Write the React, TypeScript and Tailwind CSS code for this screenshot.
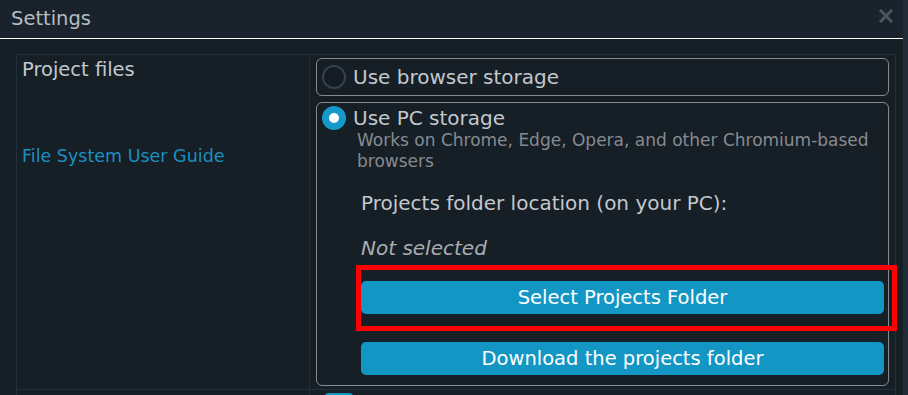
const font = { fontFamily: '"DejaVu Sans", "Open Sans", sans-serif' };

function Radio({ checked }: { checked: boolean }) {
  if (checked) {
    return (
      <span className="flex h-[24px] w-[24px] shrink-0 items-center justify-center rounded-full bg-[#1599c8]">
        <span className="h-[10px] w-[10px] rounded-full bg-white" />
      </span>
    );
  }
  return (
    <span className="h-[24px] w-[24px] shrink-0 rounded-full border-2 border-[#34414d] bg-[#141b22]" />
  );
}

export default function App() {
  return (
    <div className="flex h-[395px] w-[908px] overflow-hidden bg-[#1f2b36]" style={font}>
      <div className="flex w-[903px] flex-col bg-[#161e26]">
        {/* header */}
        <div className="flex h-[39px] shrink-0 items-center justify-between border-b border-white bg-[#1a232c] pl-[11px] pr-[10px]">
          <span className="text-[19.5px] leading-none text-[#b4bcc4]">Settings</span>
          <svg width="14" height="14" viewBox="0 0 14 14" className="-mt-[6px]">
            <path d="M2 2 L12 12 M12 2 L2 12" stroke="#4b5661" strokeWidth="3" strokeLinecap="square" />
          </svg>
        </div>

        <div className="shrink-0 pl-[16px] pr-[7px] pt-[15px]">
          <div className="grid grid-cols-[293px_1fr] border-l border-r border-t border-[#22303c]">
            {/* project files row */}
            <div className="flex flex-col border-b border-r border-[#22303c] pl-[5px] pt-[3px]">
              <span className="text-[19.5px] leading-[24px] text-[#c3c8cd]">Project files</span>
              <a className="mt-[62px] text-[17.5px] leading-[24px] text-[#1b90c0]">File System User Guide</a>
            </div>
            <div className="flex flex-col gap-[6px] border-b border-[#22303c] px-[6px] pb-[3px] pt-[3px]">
              <div className="flex h-[38px] items-center gap-[7px] rounded-[6px] border border-[#868b90] pl-[5px]">
                <Radio checked={false} />
                <span className="text-[20px] text-[#c3c8cd]">Use browser storage</span>
              </div>
              <div className="flex flex-col rounded-[6px] border border-[#868b90] pb-[10px] pl-[5px] pr-[4px] pt-[3px]">
                <div className="flex h-[24px] items-center gap-[7px]">
                  <Radio checked />
                  <span className="text-[20px] leading-[16px] text-[#c3c8cd]">Use PC storage</span>
                </div>
                <div className="pl-[35px] pr-[4px] text-[17px] leading-[21px] text-[#878b90]">
                  Works on Chrome, Edge, Opera, and other Chromium-based browsers
                </div>
                <div className="mt-[19px] pl-[39px] text-[20px] leading-[24px] text-[#c3c8cd]">
                  Projects folder location (on your PC):
                </div>
                <div className="mt-[21px] pl-[39px] text-[20px] italic leading-[24px] text-[#a9aeb3]">
                  Not selected
                </div>
                <div className="relative ml-[39px] mt-[21px]">
                  <button className="h-[33px] w-full rounded-[5px] bg-[#1396c4] text-[19.5px] text-white">
                    Select Projects Folder
                  </button>
                  <div className="pointer-events-none absolute -bottom-[17px] -left-[5px] -right-[13px] -top-[16px] border-[5px] border-[#ff0000]" />
                </div>
                <div className="ml-[39px] mt-[28px]">
                  <button className="h-[33px] w-full rounded-[5px] bg-[#1396c4] text-[19.5px] text-white">
                    Download the projects folder
                  </button>
                </div>
              </div>
            </div>

            {/* next row, cut off */}
            <div className="h-[10px] border-r border-[#22303c]" />
            <div className="pl-[14px] pt-[3px]">
              <span className="block h-[20px] w-[30px] rounded-[5px] bg-[#1396c4]" />
            </div>
          </div>
        </div>
      </div>
    </div>
  );
}
